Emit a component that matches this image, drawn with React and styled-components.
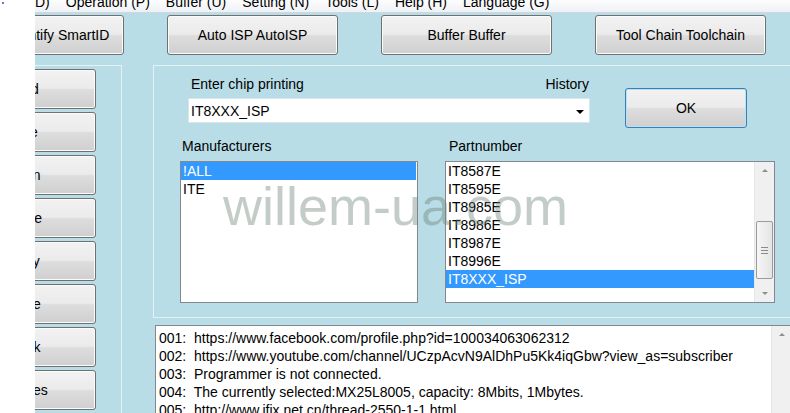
import React from "react";
import styled, { createGlobalStyle } from "styled-components";

const GlobalStyle = createGlobalStyle`
  html, body { margin: 0; padding: 0; background: #fff; }
  body {
    font-family: "Liberation Sans", Arial, sans-serif;
    font-size: 14px;
    color: #000;
    overflow: hidden;
  }
  * { box-sizing: border-box; }
`;

const Page = styled.div`
  display: flex;
  width: 790px;
  height: 413px;
  overflow: hidden;
`;

const Gutter = styled.div`
  width: 35px;
  flex: none;
  background: #fff;
  padding: 2px 0 0 2px;
`;

const Dot = styled.span`
  display: block;
  width: 2px;
  height: 2px;
  background: #7b6fc9;
`;

const Window = styled.div`
  position: relative;
  flex: 1;
  min-width: 0;
  background: #b9dde7;
  overflow: hidden;
  display: flex;
  flex-direction: column;
`;

const MenuBar = styled.div`
  height: 13px;
  flex: none;
  display: flex;
  gap: 16px;
  background: linear-gradient(#fdfdfe, #eef1f5);
  border-bottom: 1px solid #cfd8e0;
  overflow: hidden;
`;

const MenuItem = styled.span`
  margin-top: -6px;
  line-height: 16px;
  white-space: nowrap;
`;

const Toolbar = styled.div`
  display: flex;
  gap: 43px;
  padding-top: 2px;
  margin-left: -82px;
  flex: none;
`;

const Button = styled.div`
  flex: none;
  width: ${(p) => p.$w || 171}px;
  height: 40px;
  display: flex;
  align-items: center;
  justify-content: center;
  white-space: nowrap;
  border: 1px solid ${(p) => (p.$default ? "#3c7fb1" : "#707070")};
  border-radius: 3px;
  background: linear-gradient(#f2f2f2 0%, #ebebeb 48%, #dddddd 52%, #cfcfcf 100%);
  box-shadow: inset 0 0 0 1px ${(p) => (p.$default ? "#b6e2f8" : "#fbfbfb")};
  font-size: 14px;
`;

const Body = styled.div`
  display: flex;
  align-items: flex-start;
  margin-top: 10px;
`;

const LeftGroup = styled.div`
  flex: none;
  margin-left: -133px;
  height: 400px;
  border: 1px solid #e4f2f6;
  padding: 3px 25px 0 8px;
  display: flex;
  flex-direction: column;
  gap: 3px;
`;

const RightCol = styled.div`
  flex: none;
  margin-left: 31px;
  display: flex;
  flex-direction: column;
`;

const RightGroup = styled.div`
  width: 660px;
  height: 253px;
  border: 1px solid #e4f2f6;
`;

const ChipRow = styled.div`
  display: flex;
  align-items: flex-start;
  padding: 10px 0 0 34px;
`;

const ChipField = styled.div`
  width: 402px;
  display: flex;
  flex-direction: column;
`;

const FieldLabels = styled.div`
  display: flex;
  justify-content: space-between;
  line-height: 16px;
  padding: 0 1px 0 3px;
  margin-bottom: 6px;
`;

const ChipInput = styled.div`
  height: 25px;
  background: #fff;
  border: 1px solid #d8e6ec;
  display: flex;
  align-items: center;
  justify-content: space-between;
  padding: 0 5px 0 2px;
`;

const DropArrow = styled.span`
  width: 0;
  height: 0;
  border-left: 4px solid transparent;
  border-right: 4px solid transparent;
  border-top: 4px solid #000;
  margin-top: 2px;
`;

const OkButton = styled(Button)`
  margin: 12px 0 0 35px;
`;

const PartsRow = styled.div`
  display: flex;
  gap: 27px;
  padding-left: 26px;
  margin-top: 10px;
`;

const Column = styled.div`
  width: ${(p) => p.$w}px;
  display: flex;
  flex-direction: column;
`;

const ColLabel = styled.div`
  line-height: 16px;
  padding-left: ${(p) => p.$pad}px;
  margin-bottom: 7px;
`;

const ListBox = styled.div`
  height: ${(p) => p.$h}px;
  border: 1px solid #828790;
  background: #fff;
  display: flex;
`;

const ListRows = styled.div`
  flex: 1;
  min-width: 0;
  padding-right: ${(p) => p.$pr || 0}px;
`;

const Row = styled.div`
  height: 18px;
  line-height: 18px;
  padding-left: 2px;
  white-space: nowrap;
  background: ${(p) => (p.$selected ? "#3399ff" : "transparent")};
  color: ${(p) => (p.$selected ? "#fff" : "#000")};
`;

const ScrollBar = styled.div`
  width: 20px;
  flex: none;
  background: #f0f0f0;
  border-left: 1px solid #e6e6e6;
  display: flex;
  flex-direction: column;
  align-items: center;
`;

const ScrollButton = styled.div`
  height: 17px;
  width: 100%;
  flex: none;
  display: flex;
  align-items: center;
  justify-content: center;
`;

const Arrow = styled.span`
  width: 0;
  height: 0;
  border-left: 3px solid transparent;
  border-right: 3px solid transparent;
  ${(p) =>
    p.$up ? "border-bottom: 3px solid #8e8e8e;" : "border-top: 3px solid #8e8e8e;"}
`;

const Track = styled.div`
  flex: 1;
  width: 100%;
  padding: 0 1px;
`;

const Thumb = styled.div`
  margin-top: ${(p) => p.$top}px;
  height: ${(p) => p.$h}px;
  border: 1px solid #9b9b9b;
  border-radius: 2px;
  background: linear-gradient(90deg, #f6f6f6, #e4e4e4);
  display: flex;
  flex-direction: column;
  align-items: center;
  justify-content: center;
  gap: 2px;
`;

const Grip = styled.span`
  width: 7px;
  height: 1px;
  background: #8a8a8a;
`;

const LogBox = styled.div`
  margin: 7px 0 0 2px;
  width: 637px;
  height: 100px;
  border: 1px solid #828790;
  background: #fff;
  display: flex;
`;

const LogText = styled.div`
  flex: 1;
  padding: 3px 0 0 3px;
  line-height: 18px;
  white-space: pre;
  overflow: hidden;
`;

const Watermark = styled.div`
  position: absolute;
  left: 188px;
  top: 179px;
  font-family: "Liberation Sans", Arial, sans-serif;
  font-size: 54px;
  line-height: 54px;
  color: rgba(105, 128, 116, 0.4);
  pointer-events: none;
  white-space: nowrap;
`;

const menus = ["D)", "Operation (P)", "Buffer (U)", "Setting (N)", "Tools (L)", "Help (H)", "Language (G)"];
const topButtons = ["Smart Identify SmartID", "Auto ISP AutoISP", "Buffer Buffer", "Tool Chain Toolchain"];
const sideButtons = [
  "Read Read",
  "Write Write",
  "Chip Option",
  "Erase Erase",
  "Read Verify",
  "Block Erase",
  "Blank Blank",
  "Set Properties",
];
const parts = ["IT8587E", "IT8595E", "IT8985E", "IT8986E", "IT8987E", "IT8996E", "IT8XXX_ISP"];
const logLines = [
  "001:  https://www.facebook.com/profile.php?id=100034063062312",
  "002:  https://www.youtube.com/channel/UCzpAcvN9AlDhPu5Kk4iqGbw?view_as=subscriber",
  "003:  Programmer is not connected.",
  "004:  The currently selected:MX25L8005, capacity: 8Mbits, 1Mbytes.",
  "005:  http://www.ifix.net.cn/thread-2550-1-1.html",
];

export default function App() {
  return (
    <>
      <GlobalStyle />
      <Page>
        <Gutter>
          <Dot />
        </Gutter>
        <Window>
          <MenuBar>
            {menus.map((m) => (
              <MenuItem key={m}>{m}</MenuItem>
            ))}
          </MenuBar>
          <Toolbar>
            {topButtons.map((b) => (
              <Button key={b}>{b}</Button>
            ))}
          </Toolbar>
          <Body>
            <LeftGroup>
              {sideButtons.map((b) => (
                <Button key={b} $w={185}>
                  {b}
                </Button>
              ))}
            </LeftGroup>
            <RightCol>
              <RightGroup>
                <ChipRow>
                  <ChipField>
                    <FieldLabels>
                      <span>Enter chip printing</span>
                      <span>History</span>
                    </FieldLabels>
                    <ChipInput>
                      <span>IT8XXX_ISP</span>
                      <DropArrow />
                    </ChipInput>
                  </ChipField>
                  <OkButton $w={122} $default>
                    OK
                  </OkButton>
                </ChipRow>
                <PartsRow>
                  <Column $w={238}>
                    <ColLabel $pad={2}>Manufacturers</ColLabel>
                    <ListBox $h={142}>
                      <ListRows $pr={1}>
                        <Row $selected>!ALL</Row>
                        <Row>ITE</Row>
                      </ListRows>
                    </ListBox>
                  </Column>
                  <Column $w={330}>
                    <ColLabel $pad={4}>Partnumber</ColLabel>
                    <ListBox $h={142}>
                      <ListRows>
                        {parts.map((p) => (
                          <Row key={p} $selected={p === "IT8XXX_ISP"}>
                            {p}
                          </Row>
                        ))}
                      </ListRows>
                      <ScrollBar>
                        <ScrollButton>
                          <Arrow $up />
                        </ScrollButton>
                        <Track>
                          <Thumb $top={42} $h={58}>
                            <Grip />
                            <Grip />
                            <Grip />
                          </Thumb>
                        </Track>
                        <ScrollButton>
                          <Arrow />
                        </ScrollButton>
                      </ScrollBar>
                    </ListBox>
                  </Column>
                </PartsRow>
              </RightGroup>
              <LogBox>
                <LogText>
                  {logLines.map((l) => (
                    <div key={l}>{l}</div>
                  ))}
                </LogText>
                <ScrollBar>
                  <ScrollButton>
                    <Arrow $up />
                  </ScrollButton>
                </ScrollBar>
              </LogBox>
            </RightCol>
          </Body>
          <Watermark>willem-ua.com</Watermark>
        </Window>
      </Page>
    </>
  );
}
